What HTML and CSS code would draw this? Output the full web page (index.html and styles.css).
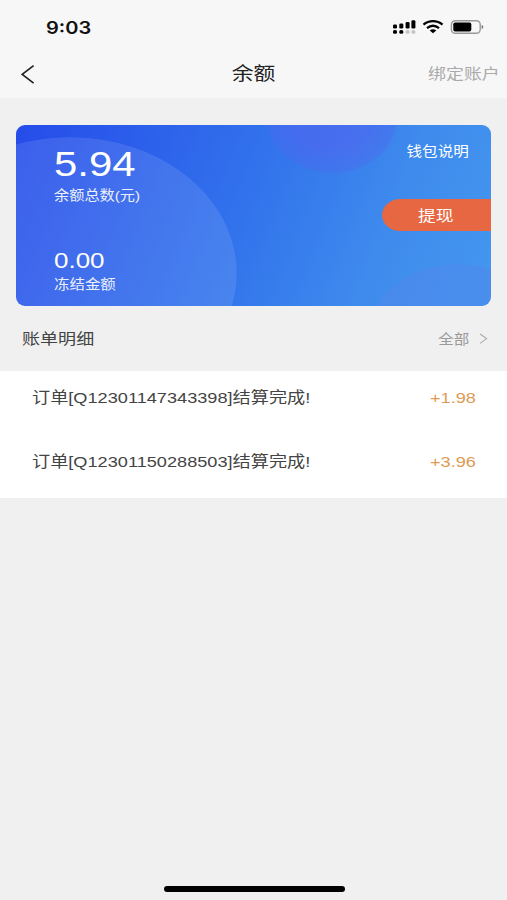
FILE: index.html
```
<!DOCTYPE html>
<html lang="zh-CN">
<head>
  <meta charset="UTF-8">
  <meta name="viewport" content="width=device-width, initial-scale=1.0">
  <title>余额</title>
  <link rel="stylesheet" href="styles.css">
</head>
<body>

<div class="page">
  <!-- Header -->
  <header class="header">
    <div class="status-bar">
      <span class="time wide">9:03</span>
      <svg class="status-icons" width="92" height="16" viewBox="0 0 92 16">
        <g fill="#000">
          <rect x="1" y="5.5" width="4" height="4" rx="1.3"/>
          <rect x="7.3" y="4.5" width="4" height="5" rx="1.3"/>
          <rect x="13.6" y="3" width="4" height="6.5" rx="1.3"/>
          <rect x="19.4" y="1.2" width="4" height="8.3" rx="1.3"/>
          <rect x="1" y="11" width="4" height="3.8" rx="1.6"/>
          <rect x="7.3" y="11" width="4" height="3.8" rx="1.6"/>
        </g>
        <g fill="#c6c6c6">
          <rect x="13.6" y="11" width="4" height="3.8" rx="1.6"/>
          <rect x="19.4" y="11" width="4" height="3.8" rx="1.6"/>
        </g>
        <g fill="none" stroke="#000" stroke-width="2.3">
          <path d="M31.5 5.6C37 1 45 1 50.5 5.6"/>
          <path d="M35 9.2C38.7 6.1 43.3 6.1 47 9.2"/>
        </g>
        <path d="M37.7 11.4C39.7 9.8 42.3 9.8 44.3 11.4L41 14.2Z"/>
        <rect x="59.4" y="1.7" width="28.8" height="12.6" rx="3.8" fill="none" stroke="#999" stroke-width="1.4"/>
        <rect x="61.3" y="3.5" width="18" height="9" rx="1.8"/>
        <path d="M89.6 6C91.8 6.6 91.8 9.4 89.6 10Z" fill="#777"/>
      </svg>
    </div>
    <div class="nav-bar">
      <svg class="back" width="14" height="20" viewBox="0 0 14 20">
        <path d="M12.6 1.6L1.2 10.4L12.6 19.2" fill="none" stroke="#222" stroke-width="1.7"/>
      </svg>
      <h1 class="title wide">余额</h1>
      <a class="bind wide">绑定账户</a>
    </div>
  </header>

  <!-- Balance card -->
  <section class="card">
    <div class="balance">
      <div class="total wide">5.94</div>
      <div class="label wide">余额总数(元)</div>
      <div class="frozen wide">0.00</div>
      <div class="label wide">冻结金额</div>
    </div>
    <div class="actions">
      <a class="explain wide">钱包说明</a>
      <div class="withdraw"><span class="wide">提现</span></div>
    </div>
  </section>

  <!-- Bill list -->
  <div class="list-head">
    <h2 class="wide">账单明细</h2>
    <a class="filter">
      <span class="wide">全部</span>
      <svg width="9" height="12" viewBox="0 0 9 12">
        <path d="M1 1L7.6 5.6L1 10.4" fill="none" stroke="#aaa" stroke-width="1.1"/>
      </svg>
    </a>
  </div>
  <ul class="list">
    <li>
      <span class="wide">订单[Q12301147343398]结算完成!</span>
      <span class="amount wide">+1.98</span>
    </li>
    <li>
      <span class="wide">订单[Q12301150288503]结算完成!</span>
      <span class="amount wide">+3.96</span>
    </li>
  </ul>

  <div class="home-bar"></div>
</div>

</body>
</html>
```
FILE: styles.css
```
* {
  box-sizing: border-box;
}

body {
  margin: 0;
  font-family: "Liberation Sans", "Noto Sans CJK SC", sans-serif;
  background-color: #f0f0f0;
  color: #444;
}

.page {
  display: flex;
  flex-direction: column;
  height: 900px;
}

/* wide letterforms */
.wide {
  display: inline-block;
  white-space: nowrap;
  transform: scaleX(1.18);
  transform-origin: left center;
}

.header {
  height: 98px;
  background-color: #f7f7f7;
}

.status-bar {
  display: flex;
  justify-content: space-between;
  align-items: center;
  height: 54px;
  padding: 0 23px 0 46px;
}

.time {
  font-family: Inter, sans-serif;
  font-size: 17px;
  font-weight: 600;
  line-height: 20px;
  padding-top: 1px;
  color: #111;
}

.nav-bar {
  display: grid;
  grid-template-columns: 1fr auto 1fr;
  align-items: center;
  height: 40px;
  padding: 0 7px 0 21px;
}

.title {
  margin: 0 13px 0 0;
  font-size: 18.5px;
  font-weight: 400;
  line-height: 24px;
  color: #222;
  transform-origin: center;
}

.bind {
  justify-self: end;
  font-size: 15.2px;
  line-height: 20px;
  color: #aaa;
  transform-origin: right center;
}

.card {
  display: flex;
  justify-content: space-between;
  height: 181px;
  margin: 27px 16px 0;
  border-radius: 9px;
  overflow: hidden;
  color: #fff;
  background:
    radial-gradient(167px 136px at 54px 148px, rgba(255, 255, 255, 0.1) 99.5%, transparent 100%),
    radial-gradient(66px 56px at 316px -7px, rgba(82, 100, 240, 0.6) 50%, rgba(76, 104, 238, 0.4) 96%, transparent 100%),
    radial-gradient(90px 72px at 442px 210px, rgba(80, 135, 235, 0.5) 97%, transparent 100%),
    linear-gradient(112deg, #264cea 0%, #3273ec 48%, #3e8aed 75%, #4497ef 100%);
}

.balance {
  display: flex;
  flex-direction: column;
  align-items: flex-start;
  padding: 19px 0 0 38px;
}

.total {
  font-size: 35.5px;
  line-height: 41px;
}

.label {
  font-size: 13.1px;
  line-height: 20px;
  opacity: 0.9;
}

.total + .label {
  margin-top: 1px;
  transform: scaleX(1.16);
}

.frozen {
  margin-top: 41px;
  font-size: 22px;
  line-height: 27px;
}

.frozen + .label {
  margin-top: 1px;
}

.actions {
  display: flex;
  flex-direction: column;
  align-items: flex-end;
  padding-top: 17px;
}

.explain {
  margin-right: 22px;
  font-size: 13.2px;
  line-height: 20px;
  transform-origin: right center;
}

.withdraw {
  width: 109px;
  height: 32px;
  margin-top: 37px;
  padding-left: 36px;
  border-radius: 18px 0 0 18px / 16px 0 0 16px;
  background-color: #e66742;
  font-size: 15px;
  line-height: 33px;
}

.list-head {
  display: flex;
  justify-content: space-between;
  align-items: center;
  height: 65px;
  padding: 0 19px 0 22px;
}

.list-head h2 {
  margin: 0 0 3px;
  font-size: 15.3px;
  font-weight: 400;
}

.filter {
  display: flex;
  align-items: center;
  gap: 10px;
  font-size: 13.2px;
  color: #999;
}

.filter .wide {
  transform-origin: right center;
}

.list {
  height: 127px;
  margin: 0;
  padding: 0 31px 0 32px;
  list-style: none;
  background-color: #fff;
}

.list li {
  display: flex;
  justify-content: space-between;
  height: 64px;
  padding-top: 16px;
  font-size: 15.4px;
  line-height: 22px;
}

.list .amount {
  color: #de9a55;
  transform-origin: right center;
}

.home-bar {
  width: 181px;
  height: 6px;
  margin: auto auto 8px;
  margin-left: 164px;
  border-radius: 3px;
  background-color: #000;
}
```
